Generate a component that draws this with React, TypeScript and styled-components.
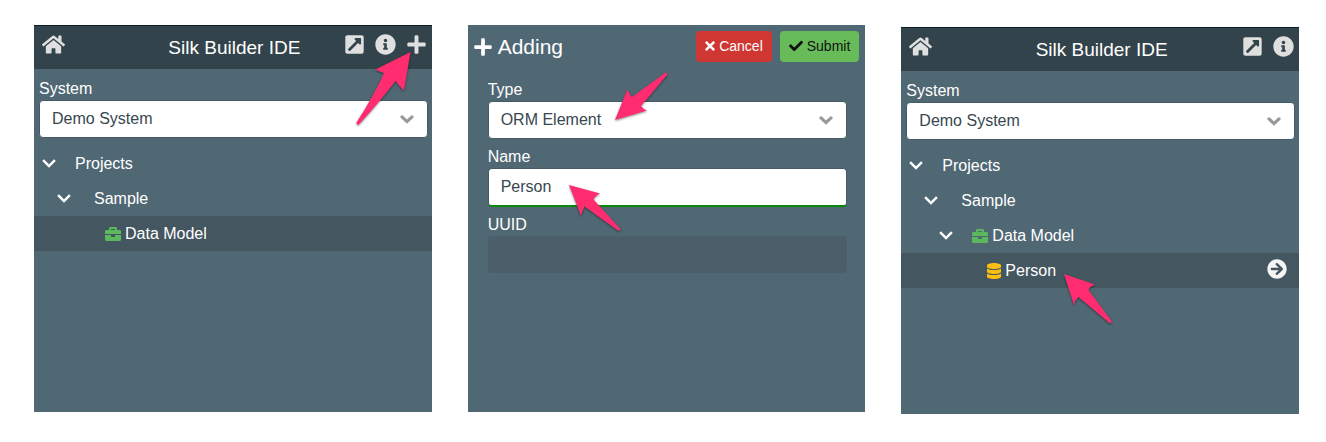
import React from 'react';
import styled, { createGlobalStyle } from 'styled-components';
import {
  FaArrowCircleRight,
  FaBriefcase,
  FaCheck,
  FaDatabase,
  FaExternalLinkSquareAlt,
  FaHome,
  FaInfoCircle,
  FaPlus,
  FaTimes,
} from 'react-icons/fa';

const GlobalStyle = createGlobalStyle`
  *, *::before, *::after { box-sizing: border-box; }
  body {
    margin: 0;
    background: #fff;
    font-family: "Liberation Sans", Arial, sans-serif;
    font-size: 16px;
  }
  button, input, select { font: inherit; }
`;

const Page = styled.main`
  display: grid;
  grid-template-columns: repeat(3, minmax(0, 1fr));
  align-items: start;
  gap: 36px;
  padding: 25px 27px 0 34px;
`;

const Panel = styled.section<{ $drop?: boolean }>`
  position: relative;
  min-height: 387px;
  margin-top: ${(p) => (p.$drop ? 2 : 0)}px;
  background: #506774;
  color: #fff;
`;

const NavBar = styled.header`
  display: grid;
  grid-template-columns: 1fr auto 1fr;
  align-items: center;
  height: 44px;
  padding: 0 5px 6px 8px;
  border-top: 1px solid #0e1c26;
  background: #33434b;
`;

const Title = styled.h1`
  margin: 0;
  padding-top: 6px;
  font-size: 19px;
  font-weight: 400;
  line-height: 24px;
`;

const Actions = styled.div`
  display: flex;
  justify-content: flex-end;
  gap: 10px;
`;

const IconButton = styled.button<{ $size?: number }>`
  display: flex;
  justify-self: start;
  padding: 0;
  border: 0;
  background: none;
  color: #dfdfdf;
  font-size: ${(p) => p.$size ?? 21}px;
  cursor: pointer;
`;

const RowButton = styled(IconButton)`
  padding-bottom: 4px;
  color: #f5f5f5;
`;

const FormBar = styled.header`
  display: flex;
  align-items: center;
  gap: 8px;
  height: 44px;
  padding: 0 6px 1px 5px;
`;

const FormTitle = styled.h2`
  display: flex;
  align-items: center;
  gap: 5px;
  margin: 0 auto 0 0;
  font-size: 21px;
  font-weight: 400;
  line-height: 24px;
`;

const FormButton = styled.button<{ $kind: 'cancel' | 'submit' }>`
  display: flex;
  align-items: center;
  gap: 4px;
  height: 31px;
  padding: 0 9px 1px;
  border: 0;
  border-radius: 4px;
  background: ${(p) => (p.$kind === 'cancel' ? '#d03632' : '#68bb59')};
  color: ${(p) => (p.$kind === 'cancel' ? '#fff' : '#111')};
  font-size: 14px;
  cursor: pointer;

  svg {
    width: ${(p) => (p.$kind === 'cancel' ? 10 : 14)}px;
    height: 14px;
  }
`;

const Fields = styled.div<{ $wide?: boolean }>`
  display: flex;
  flex-direction: column;
  gap: 7px;
  padding: ${(p) => (p.$wide ? '9px 4px 8px 5px' : '10px 18px 8px 20px')};
`;

const Field = styled.div`
  display: flex;
  flex-direction: column;
`;

const Label = styled.label`
  height: 22px;
  line-height: 21px;
`;

const SelectWrap = styled.div`
  position: relative;
  display: flex;

  svg {
    position: absolute;
    top: 15px;
    right: 14px;
    pointer-events: none;
  }
`;

const Select = styled.select`
  appearance: none;
  width: 100%;
  height: 38px;
  padding: 0 36px 2px 12px;
  border: 1px solid #465a65;
  border-radius: 4px;
  background: #fff;
  color: #37474f;
`;

const TextInput = styled.input`
  width: 100%;
  height: 39px;
  padding: 0 12px;
  border: 1px solid #465a65;
  border-bottom: 2px solid #0a870a;
  border-radius: 4px;
  background: #fff;
  color: #37474f;

  &:disabled {
    height: 37px;
    border: 0;
    background: #4a5f6a;
  }
`;

const Tree = styled.ul`
  margin: 0;
  padding: 0;
  list-style: none;
`;

const TreeRow = styled.li<{ $level: number; $selected?: boolean }>`
  display: flex;
  align-items: center;
  height: 35px;
  padding: 0 12px 0 ${(p) => 8 + p.$level * 15}px;
  background: ${(p) => (p.$selected ? '#445660' : 'transparent')};
`;

const Toggle = styled.span`
  display: flex;
  width: 33px;
`;

const NodeIcon = styled.span<{ $kind?: 'briefcase' | 'database' }>`
  display: flex;
  margin-right: 4px;
  color: ${(p) => (p.$kind === 'database' ? '#fdbf0f' : '#5cb85c')};

  svg {
    width: ${(p) => (p.$kind === 'database' ? 14 : 16)}px;
    height: 16px;
  }
`;

const NodeLabel = styled.span`
  margin-right: auto;
`;

const Pointer = styled.svg<{ $x: number; $y: number }>`
  position: absolute;
  left: ${(p) => p.$x}px;
  top: ${(p) => p.$y}px;
  fill: #ff2d6f;
  overflow: visible;
  filter: drop-shadow(0 1px 1px rgba(0, 0, 0, 0.45));
  pointer-events: none;
`;

const RowChevron = () => (
  <svg width="14" height="10" viewBox="0 0 14 10" fill="none" stroke="#fff" strokeWidth="2.5" aria-hidden="true">
    <path d="M1.1 1.2 L7 7.1 L12.9 1.2" />
  </svg>
);

const SelectChevron = () => (
  <svg width="14" height="9" viewBox="0 0 14 9" fill="none" stroke="#999" strokeWidth="3.2" strokeLinecap="round" aria-hidden="true">
    <path d="M2 1.9 L7 6.6 L12 1.9" />
  </svg>
);

type NodeData = {
  label: string;
  open?: boolean;
  icon?: 'briefcase' | 'database';
  selected?: boolean;
  link?: boolean;
};

function ProjectTree({ nodes }: { nodes: NodeData[] }) {
  return (
    <Tree>
      {nodes.map((n, level) => (
        <TreeRow key={n.label} $level={level} $selected={n.selected}>
          <Toggle>{n.open && <RowChevron />}</Toggle>
          {level > 0 && (
            <NodeIcon $kind={n.icon}>
              {n.icon === 'briefcase' && <FaBriefcase />}
              {n.icon === 'database' && <FaDatabase />}
            </NodeIcon>
          )}
          <NodeLabel>{n.label}</NodeLabel>
          {n.link && (
            <RowButton aria-label="Open" $size={20}>
              <FaArrowCircleRight />
            </RowButton>
          )}
        </TreeRow>
      ))}
    </Tree>
  );
}

function Navigator({ id, nodes, canAdd }: { id: string; nodes: NodeData[]; canAdd?: boolean }) {
  return (
    <>
      <NavBar>
        <IconButton aria-label="Home" $size={23}><FaHome /></IconButton>
        <Title>Silk Builder IDE</Title>
        <Actions>
          <IconButton aria-label="Open in window"><FaExternalLinkSquareAlt /></IconButton>
          <IconButton aria-label="Information"><FaInfoCircle /></IconButton>
          {canAdd && <IconButton aria-label="Add"><FaPlus /></IconButton>}
        </Actions>
      </NavBar>
      <Fields $wide>
        <Field>
          <Label htmlFor={id}>System</Label>
          <SelectWrap>
            <Select id={id}><option>Demo System</option></Select>
            <SelectChevron />
          </SelectWrap>
        </Field>
      </Fields>
      <ProjectTree nodes={nodes} />
    </>
  );
}

export default function App() {
  return (
    <>
      <GlobalStyle />
      <Page>
        <Panel>
          <Navigator
            id="system-before"
            canAdd
            nodes={[
              { label: 'Projects', open: true },
              { label: 'Sample', open: true },
              { label: 'Data Model', icon: 'briefcase', selected: true },
            ]}
          />
          <Pointer $x={322} $y={27} width="56" height="74" aria-hidden="true">
            <path d="M54.5 0 L19.5 17.5 Q24 20 28 21 C21 37 10 56 .8 70 C0 72.5 2 74 3.8 71.5 C17 57 29 43 39.5 29 Q43 34 48 38.5 Z" />
          </Pointer>
        </Panel>
        <Panel>
          <FormBar>
            <FormTitle><FaPlus size={20} />Adding</FormTitle>
            <FormButton type="button" $kind="cancel"><FaTimes />Cancel</FormButton>
            <FormButton type="button" $kind="submit"><FaCheck />Submit</FormButton>
          </FormBar>
          <Fields>
            <Field>
              <Label htmlFor="type">Type</Label>
              <SelectWrap>
                <Select id="type"><option>ORM Element</option></Select>
                <SelectChevron />
              </SelectWrap>
            </Field>
            <Field>
              <Label htmlFor="name">Name</Label>
              <TextInput id="name" defaultValue="Person" />
            </Field>
            <Field>
              <Label htmlFor="uuid">UUID</Label>
              <TextInput id="uuid" disabled />
            </Field>
          </Fields>
          <Pointer $x={147} $y={47} width="54" height="50" aria-hidden="true">
            <path d="M0 48 L12.5 17 Q14 22 17 25 L50 1 Q53 0 52 3 L26 34 Q28 37 32 38.5 Z" />
          </Pointer>
          <Pointer $x={101} $y={160} width="54" height="48" aria-hidden="true">
            <path d="M0 0 L31 8.5 Q26 11 24.5 14.5 L51 43.5 Q52 46 49 45.5 L15.5 21.5 Q13 26 12 31 Z" />
          </Pointer>
        </Panel>
        <Panel $drop>
          <Navigator
            id="system-after"
            nodes={[
              { label: 'Projects', open: true },
              { label: 'Sample', open: true },
              { label: 'Data Model', open: true, icon: 'briefcase' },
              { label: 'Person', icon: 'database', selected: true, link: true },
            ]}
          />
          <Pointer $x={163} $y={247} width="54" height="50" aria-hidden="true">
            <path d="M0 0 L31 10.5 Q26 12 24.5 16 L47.5 47 Q48 49.5 45.5 49 L14.5 23 Q11 26 10 31 Z" />
          </Pointer>
        </Panel>
      </Page>
    </>
  );
}
